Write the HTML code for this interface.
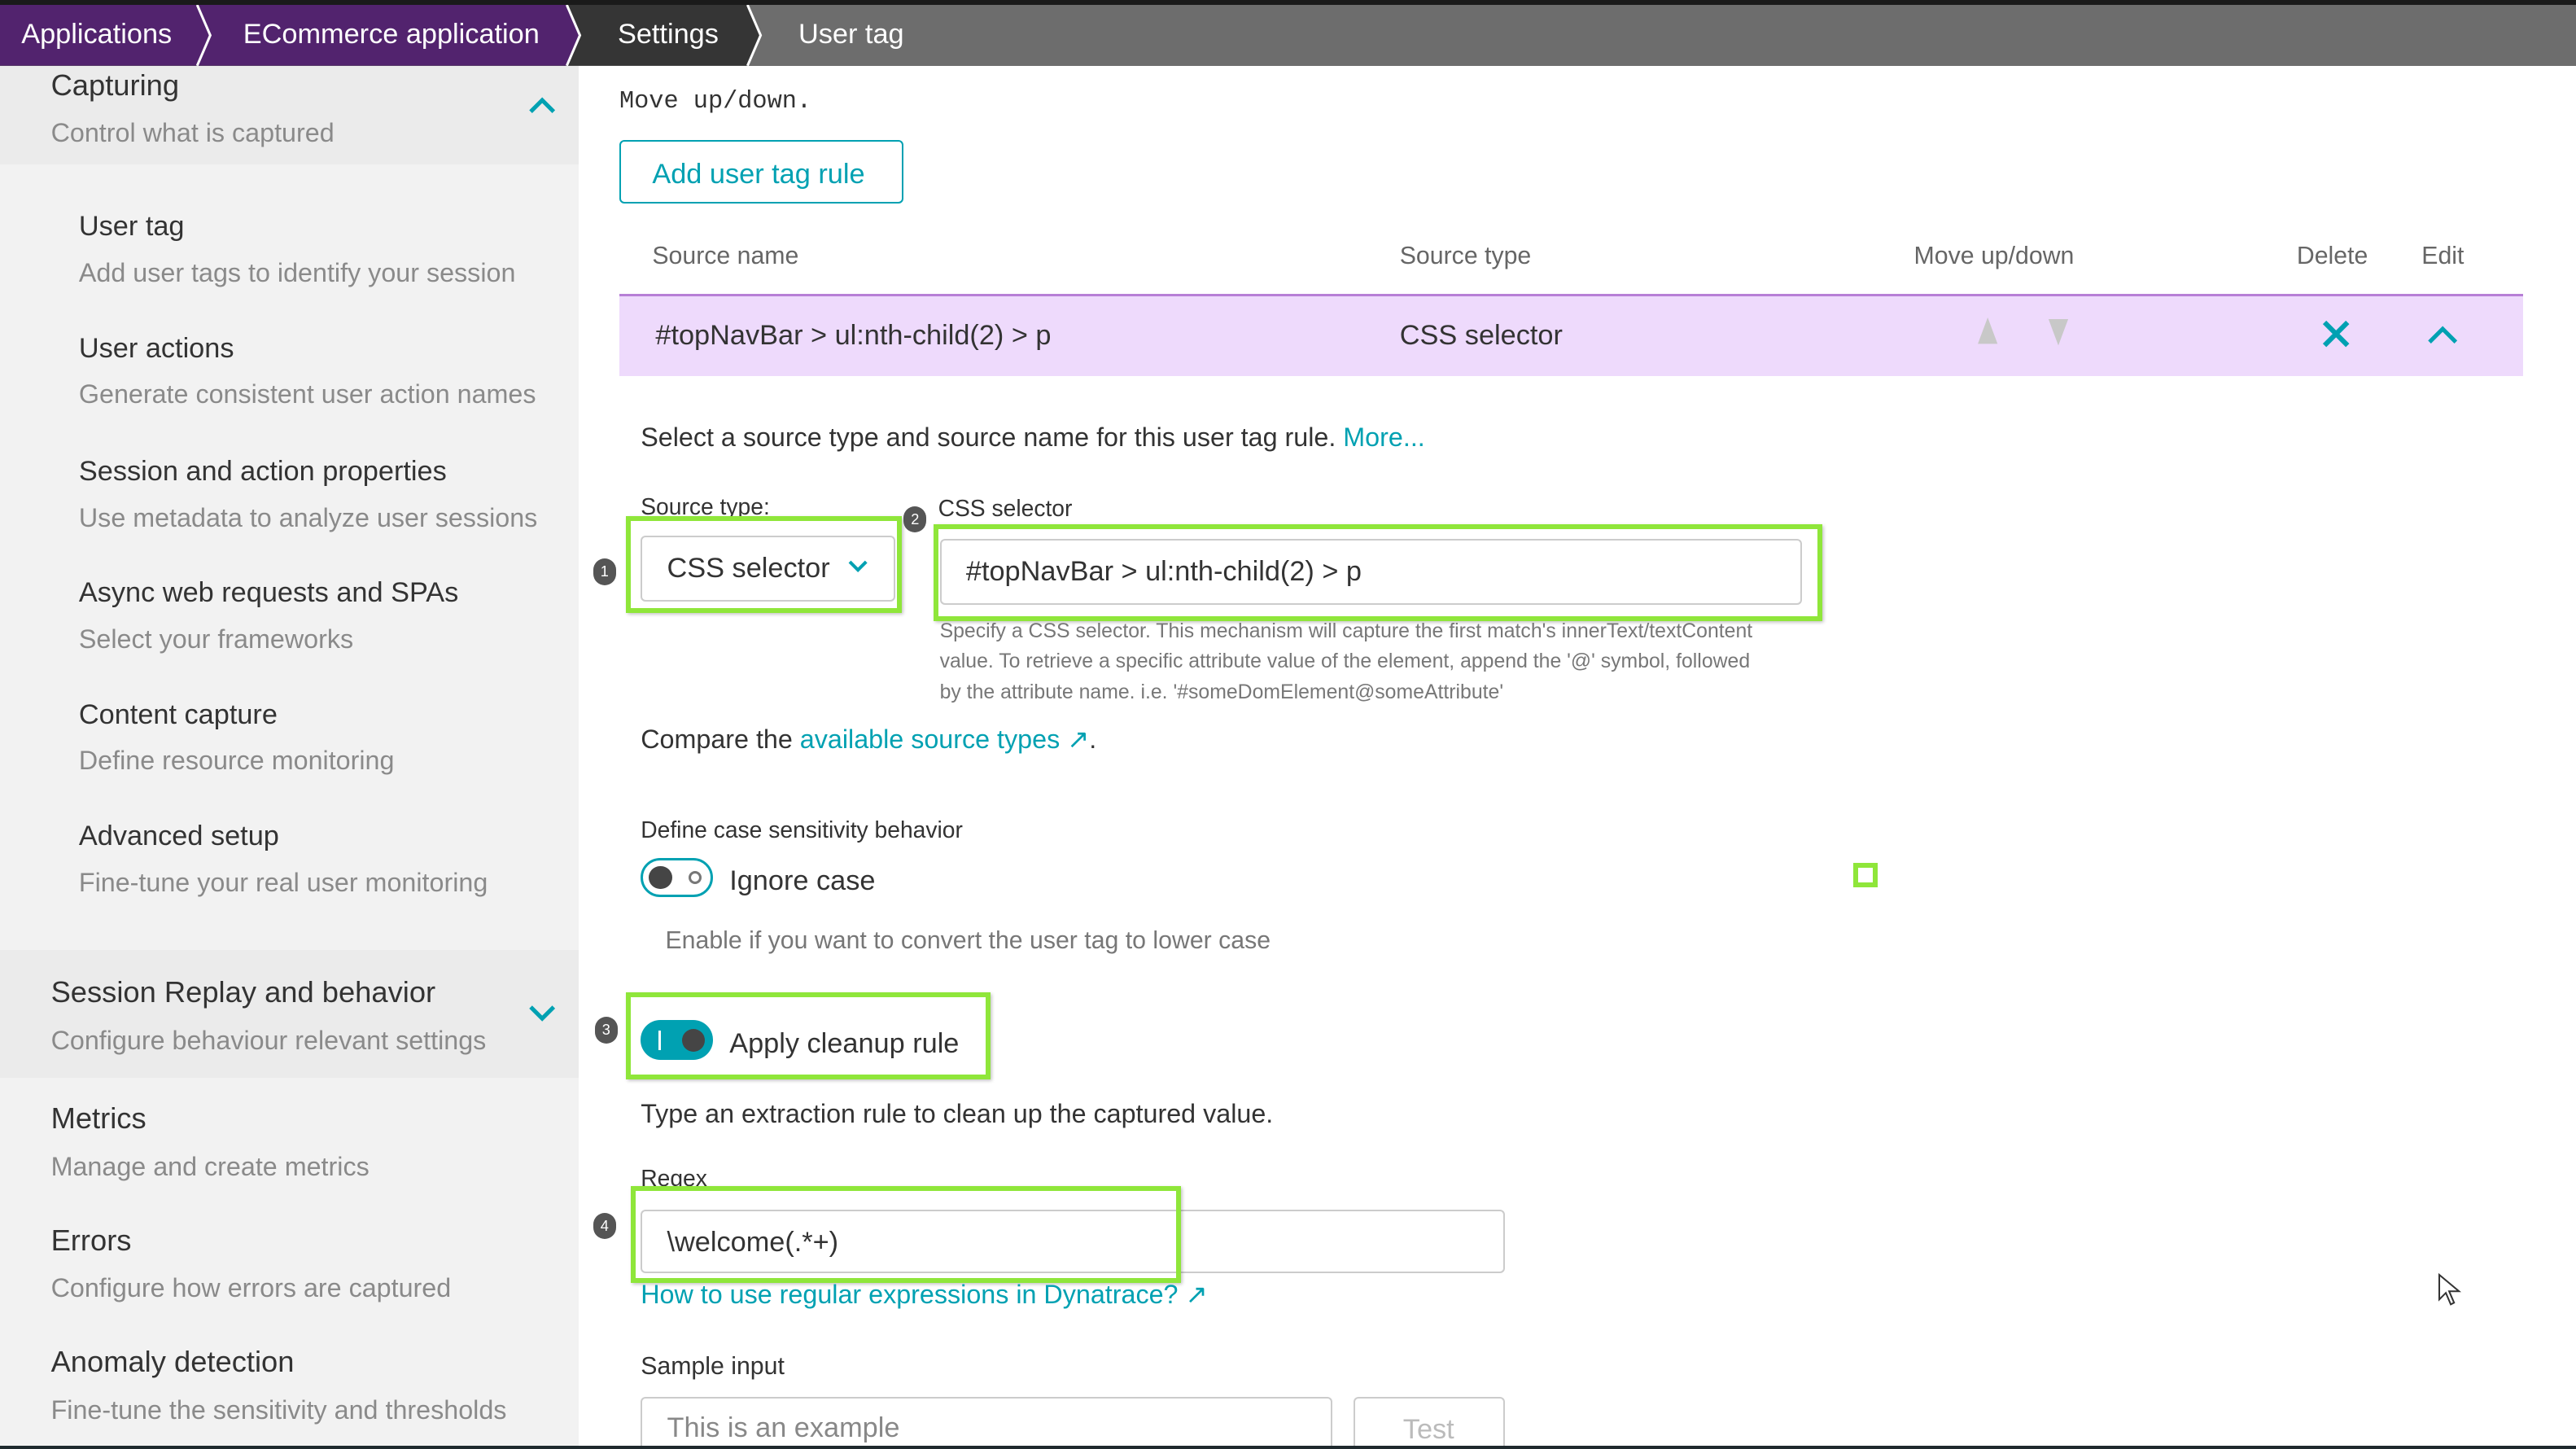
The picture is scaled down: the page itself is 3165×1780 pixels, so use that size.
<!DOCTYPE html>
<html><head><meta charset="utf-8"><style>
*{margin:0;padding:0;box-sizing:border-box}
html,body{width:3165px;height:1780px;overflow:hidden;background:#fff}
#w{zoom:2.0185;width:1568px;height:882px;position:relative;font-family:"Liberation Sans Narrow","Liberation Sans",sans-serif;color:#454545;overflow:hidden}
.a{position:absolute;white-space:nowrap;line-height:20px;margin-top:1px}
.t{color:#00a1b2}
.g{position:absolute;border:3px solid #8fe63a;box-shadow:1px 1px 2px rgba(0,0,0,.25)}
.b{position:absolute;width:14px;height:16px;border-radius:7px;background:#555;color:#fff;font-size:9px;line-height:16px;text-align:center}
.in{position:absolute;border:1px solid #ccc;border-radius:3px;background:#fff}
</style></head><body><div id="w">
<div style="position:absolute;left:0;top:0;width:1568px;height:3px;background:#1a1a1a"></div>
<div style="position:absolute;left:0;top:3px;width:1568px;height:37px;background:#6d6d6d"></div>
<svg style="position:absolute;left:0;top:3px" width="480" height="37">
<polygon points="0,0 455,0 463,18.5 455,37 0,37" fill="#353535"/>
<polygon points="0,0 345,0 353,18.5 345,37 0,37" fill="#52236e"/>
<polyline points="455,0 463,18.5 455,37" fill="none" stroke="#fff" stroke-width="1.5"/>
<polyline points="345,0 353,18.5 345,37" fill="none" stroke="#fff" stroke-width="1.5"/>
<polyline points="120,0 128,18.5 120,37" fill="none" stroke="#fff" stroke-width="1.5"/>
</svg>
<div class="a" style="left:13px;top:10px;color:#fff;font-size:17px">Applications</div>
<div class="a" style="left:148px;top:10px;color:#fff;font-size:17px">ECommerce application</div>
<div class="a" style="left:376px;top:10px;color:#fff;font-size:17px">Settings</div>
<div class="a" style="left:486px;top:10px;color:#fff;font-size:17px">User tag</div>

<div style="position:absolute;left:0;top:40px;width:352px;height:842px;background:#f2f2f2"></div>
<div style="position:absolute;left:0;top:40px;width:352px;height:60px;background:#ebebeb"></div>
<div style="position:absolute;left:0;top:578px;width:352px;height:78px;background:#ebebeb"></div>
<div class="a" style="left:31px;top:41px;font-size:18px;color:#333">Capturing</div>
<div class="a" style="left:31px;top:70px;font-size:16px;color:#8a8a8a">Control what is captured</div>
<svg class="a" style="left:321px;top:57px" width="18" height="12"><polyline points="2,10 9,3 16,10" fill="none" stroke="#00a1b2" stroke-width="2.5"/></svg>
<div class="a" style="left:48px;top:127px;font-size:17px;color:#333">User tag</div>
<div class="a" style="left:48px;top:155px;font-size:16px;color:#8a8a8a">Add user tags to identify your session</div>
<div class="a" style="left:48px;top:201px;font-size:17px;color:#333">User actions</div>
<div class="a" style="left:48px;top:229px;font-size:16px;color:#8a8a8a">Generate consistent user action names</div>
<div class="a" style="left:48px;top:276px;font-size:17px;color:#333">Session and action properties</div>
<div class="a" style="left:48px;top:304px;font-size:16px;color:#8a8a8a">Use metadata to analyze user sessions</div>
<div class="a" style="left:48px;top:350px;font-size:17px;color:#333">Async web requests and SPAs</div>
<div class="a" style="left:48px;top:378px;font-size:16px;color:#8a8a8a">Select your frameworks</div>
<div class="a" style="left:48px;top:424px;font-size:17px;color:#333">Content capture</div>
<div class="a" style="left:48px;top:452px;font-size:16px;color:#8a8a8a">Define resource monitoring</div>
<div class="a" style="left:48px;top:498px;font-size:17px;color:#333">Advanced setup</div>
<div class="a" style="left:48px;top:526px;font-size:16px;color:#8a8a8a">Fine-tune your real user monitoring</div>
<div class="a" style="left:31px;top:593px;font-size:18px;color:#333">Session Replay and behavior</div>
<div class="a" style="left:31px;top:622px;font-size:16px;color:#8a8a8a">Configure behaviour relevant settings</div>
<svg class="a" style="left:321px;top:610px" width="18" height="12"><polyline points="2,2 9,9 16,2" fill="none" stroke="#00a1b2" stroke-width="2.5"/></svg>
<div class="a" style="left:31px;top:670px;font-size:18px;color:#333">Metrics</div>
<div class="a" style="left:31px;top:699px;font-size:16px;color:#8a8a8a">Manage and create metrics</div>
<div class="a" style="left:31px;top:744px;font-size:18px;color:#333">Errors</div>
<div class="a" style="left:31px;top:773px;font-size:16px;color:#8a8a8a">Configure how errors are captured</div>
<div class="a" style="left:31px;top:818px;font-size:18px;color:#333">Anomaly detection</div>
<div class="a" style="left:31px;top:847px;font-size:16px;color:#8a8a8a">Fine-tune the sensitivity and thresholds</div>

<div class="a" style="left:377px;top:51px;font-family:'Liberation Mono',monospace;font-size:15px;color:#333">Move up/down.</div>
<div style="position:absolute;left:377px;top:85px;width:173px;height:39px;border:1px solid #00a1b2;border-radius:3px"></div>
<div class="a t" style="left:397px;top:95px;font-size:17px">Add user tag rule</div>
<div class="a" style="left:397px;top:145px;font-size:15px;color:#666">Source name</div>
<div class="a" style="left:852px;top:145px;font-size:15px;color:#666">Source type</div>
<div class="a" style="left:1165px;top:145px;font-size:15px;color:#666">Move up/down</div>
<div class="a" style="left:1398px;top:145px;font-size:15px;color:#666">Delete</div>
<div class="a" style="left:1474px;top:145px;font-size:15px;color:#666">Edit</div>
<div style="position:absolute;left:377px;top:179px;width:1159px;height:50px;background:#eedafc;border-top:1.5px solid #b77fd6"></div>
<div class="a" style="left:399px;top:193px;font-size:17px;color:#333">#topNavBar &gt; ul:nth-child(2) &gt; p</div>
<div class="a" style="left:852px;top:193px;font-size:17px;color:#333">CSS selector</div>
<svg style="position:absolute;left:1200px;top:192px" width="65" height="20"><polygon points="10,1 16,17 4,17" fill="#c8c8c8"/><polygon points="47,2 59,2 53,18" fill="#c8c8c8"/></svg>
<svg style="position:absolute;left:1412px;top:194px" width="20" height="18"><path d="M3,2 L17,16 M17,2 L3,16" stroke="#00a1b2" stroke-width="3"/></svg>
<svg style="position:absolute;left:1477px;top:197px" width="20" height="14"><polyline points="2,11 10,3 18,11" fill="none" stroke="#00a1b2" stroke-width="2.5"/></svg>

<div class="a" style="left:390px;top:255px;font-size:16px;color:#333">Select a source type and source name for this user tag rule. <span class="t">More...</span></div>
<div class="a" style="left:390px;top:297px;font-size:14px;color:#333">Source type:</div>
<div class="a" style="left:571px;top:298px;font-size:14px;color:#333">CSS selector</div>
<div class="in" style="left:390px;top:326px;width:155px;height:40px"></div>
<div class="a" style="left:406px;top:335px;font-size:17px;color:#333">CSS selector</div>
<svg style="position:absolute;left:515px;top:340px" width="14" height="10"><polyline points="2,2 7,7 12,2" fill="none" stroke="#00a1b2" stroke-width="2"/></svg>
<div class="g" style="left:381px;top:314px;width:168px;height:59px"></div>
<div class="b" style="left:361px;top:340px">1</div>
<div class="in" style="left:572px;top:328px;width:525px;height:40px"></div>
<div class="a" style="left:588px;top:337px;font-size:17px;color:#333">#topNavBar &gt; ul:nth-child(2) &gt; p</div>
<div class="g" style="left:568px;top:319px;width:541px;height:59px"></div>
<div class="b" style="left:550px;top:308px">2</div>
<div class="a" style="left:572px;top:374px;font-size:12.3px;color:#777;line-height:18.5px">Specify a CSS selector. This mechanism will capture the first match's innerText/textContent<br>value. To retrieve a specific attribute value of the element, append the '@' symbol, followed<br>by the attribute name. i.e. '#someDomElement@someAttribute'</div>
<div class="a" style="left:390px;top:439px;font-size:16px;color:#333">Compare the <span class="t">available source types ↗</span>.</div>
<div class="a" style="left:390px;top:494px;font-size:14px;color:#333">Define case sensitivity behavior</div>
<div style="position:absolute;left:390px;top:522px;width:44px;height:24px;border:1.5px solid #00a1b2;border-radius:12px"></div>
<div style="position:absolute;left:395px;top:527px;width:14px;height:14px;border-radius:7px;background:#454545"></div>
<div style="position:absolute;left:419px;top:530px;width:8px;height:8px;border-radius:4px;border:1.5px solid #777"></div>
<div class="a" style="left:444px;top:525px;font-size:17px;color:#333">Ignore case</div>
<div style="position:absolute;left:1128px;top:525px;width:15px;height:15px;border:3px solid #8fe63a"></div>
<div class="a" style="left:405px;top:562px;font-size:15px;color:#777">Enable if you want to convert the user tag to lower case</div>
<div style="position:absolute;left:390px;top:621px;width:44px;height:24px;background:#00a1b2;border-radius:12px"></div>
<div style="position:absolute;left:401px;top:627px;width:1.5px;height:12px;background:#fff"></div>
<div style="position:absolute;left:415px;top:626px;width:14px;height:14px;border-radius:7px;background:#454545"></div>
<div class="a" style="left:444px;top:624px;font-size:17px;color:#333">Apply cleanup rule</div>
<div class="g" style="left:381px;top:604px;width:222px;height:53px"></div>
<div class="b" style="left:362px;top:619px">3</div>
<div class="a" style="left:390px;top:667px;font-size:16px;color:#333">Type an extraction rule to clean up the captured value.</div>
<div class="a" style="left:390px;top:706px;font-size:14px;color:#333">Regex</div>
<div class="in" style="left:390px;top:736px;width:526px;height:39px"></div>
<div class="a" style="left:406px;top:745px;font-size:17px;color:#333">\welcome(.*+)</div>
<div class="g" style="left:384px;top:722px;width:335px;height:59px"></div>
<div class="b" style="left:361px;top:738px">4</div>
<div class="a t" style="left:390px;top:777px;font-size:16px">How to use regular expressions in Dynatrace? ↗</div>
<div class="a" style="left:390px;top:821px;font-size:15px;color:#333">Sample input</div>
<div class="in" style="left:390px;top:850px;width:421px;height:40px"></div>
<div class="a" style="left:406px;top:858px;font-size:17px;color:#888">This is an example</div>
<div class="in" style="left:824px;top:850px;width:92px;height:40px"></div>
<div class="a" style="left:854px;top:859px;font-size:17px;color:#bbb">Test</div>
<svg style="position:absolute;left:1484px;top:775px" width="16" height="22"><path d="M1,1 L1,16 L5,12 L8,19 L10,18 L7,11 L13,11 Z" fill="#fff" stroke="#333" stroke-width="1"/></svg>
<div style="position:absolute;left:0;top:880px;width:1568px;height:2px;background:#1f2a2e"></div>
</div></body></html>
